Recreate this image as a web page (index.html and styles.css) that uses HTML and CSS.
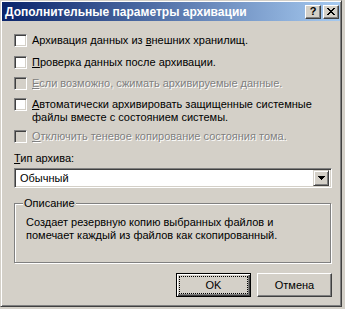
FILE: index.html
```html
<!DOCTYPE html>
<html lang="ru">
<head>
  <meta charset="UTF-8" />
  <title>Дополнительные параметры архивации</title>
  <link rel="stylesheet" href="styles.css">
</head>
<body>

  <div class="window">
    <div class="titlebar">
      <span class="title">Дополнительные параметры архивации</span>
      <div class="caption-buttons">
        <span class="cap-btn">?</span>
        <span class="cap-btn">
          <svg width="8" height="7" viewBox="0 0 8 7" shape-rendering="crispEdges">
            <path d="M0 0h2v1h-2zM6 0h2v1h-2zM1 1h2v1h-2zM5 1h2v1h-2zM2 2h4v1h-4zM3 3h2v1h-2zM2 4h4v1h-4zM1 5h2v1h-2zM5 5h2v1h-2zM0 6h2v1h-2zM6 6h2v1h-2z" fill="#000"/>
          </svg>
        </span>
      </div>
    </div>

    <div class="content">
      <div class="check row1">
        <span class="box"></span>
        <span class="text">Архивация данных из <u>в</u>нешних хранилищ.</span>
      </div>
      <div class="check row2">
        <span class="box"></span>
        <span class="text"><u>П</u>роверка данных после архивации.</span>
      </div>
      <div class="check row3 disabled">
        <span class="box"></span>
        <span class="text"><u>Е</u>сли возможно, сжимать архивируемые данные.</span>
      </div>
      <div class="check row4">
        <span class="box"></span>
        <span class="text"><u>А</u>втоматически архивировать защищенные системные<br>файлы вместе с состоянием системы.</span>
      </div>
      <div class="check row5 disabled">
        <span class="box"></span>
        <span class="text"><u>О</u>тключить теневое копирование состояния тома.</span>
      </div>

      <div class="field-label"><u>Т</u>ип архива:</div>
      <div class="combo">
        <span class="combo-value">Обычный</span>
        <span class="drop-btn">
          <svg width="7" height="4" viewBox="0 0 7 4" shape-rendering="crispEdges">
            <path d="M0 0h7v1h-7zM1 1h5v1h-5zM2 2h3v1h-3zM3 3h1v1h-1z" fill="#000"/>
          </svg>
        </span>
      </div>

      <div class="group">
        <span class="group-label">Описание</span>
        <p class="group-text">Создает резервную копию выбранных файлов и<br>помечает каждый из файлов как скопированный.</p>
      </div>

      <div class="buttons">
        <button class="btn default"><span class="focus">OK</span></button>
        <button class="btn">Отмена</button>
      </div>
    </div>
  </div>

</body>
</html>
```

FILE: styles.css
```css
body {
  margin: 0;
  background: #d4d0c8;
  font-family: "Liberation Sans", Arial, sans-serif;
  font-size: 11px;
  color: #000;
}
.window {
  width: 342px;
  height: 307px;
  box-sizing: border-box;
  padding: 1px;
  border: 1px solid;
  border-color: #d4d0c8 #404040 #404040 #d4d0c8;
  box-shadow: inset 1px 1px #fff, inset -1px -1px #808080;
  background: #d4d0c8;
}
.titlebar {
  height: 19px;
  display: flex;
  align-items: center;
  justify-content: space-between;
  padding-left: 3px;
  background: linear-gradient(to right, #0a246a, #a6caf0);
}
.title {
  color: #fff;
  font-weight: bold;
  font-size: 12px;
}
.caption-buttons {
  display: flex;
  gap: 2px;
  margin-right: 1px;
}
.cap-btn {
  width: 16px;
  height: 14px;
  box-sizing: border-box;
  display: flex;
  align-items: center;
  justify-content: center;
  background: #d4d0c8;
  border: 1px solid;
  border-color: #fff #404040 #404040 #fff;
  box-shadow: inset -1px -1px #808080;
  font-weight: bold;
  font-size: 11px;
  line-height: 1;
}
.content {
  padding: 13px 8px 0 12px;
}
.check {
  display: flex;
  align-items: flex-start;
  line-height: 13px;
}
.row2 { margin-top: 9px; }
.row3 { margin-top: 8px; }
.row4 { margin-top: 8px; }
.row5 { margin-top: 6px; }
.box {
  width: 13px;
  height: 13px;
  flex: none;
  box-sizing: border-box;
  border: 1px solid;
  border-color: #808080 #fff #fff #808080;
  box-shadow: inset 1px 1px #404040, inset -1px -1px #d4d0c8;
  background: #fff;
}
.text {
  margin-left: 5px;
}
.disabled .box {
  background: #d4d0c8;
}
.disabled .text {
  color: #808080;
  text-shadow: 1px 1px 0 #fff;
}
.field-label {
  margin-top: 9px;
  line-height: 13px;
}
.combo {
  margin-top: 3px;
  width: 318px;
  height: 20px;
  box-sizing: border-box;
  display: flex;
  align-items: center;
  justify-content: space-between;
  border: 1px solid;
  border-color: #808080 #fff #fff #808080;
  box-shadow: inset 1px 1px #404040, inset -1px -1px #d4d0c8;
  background: #fff;
  padding: 2px;
}
.combo-value {
  padding-left: 3px;
}
.drop-btn {
  width: 16px;
  height: 16px;
  box-sizing: border-box;
  display: flex;
  align-items: center;
  justify-content: center;
  background: #d4d0c8;
  border: 1px solid;
  border-color: #d4d0c8 #404040 #404040 #d4d0c8;
  box-shadow: inset 1px 1px #fff, inset -1px -1px #808080;
}
.group {
  position: relative;
  margin-top: 15px;
  width: 317px;
  height: 60px;
  box-sizing: border-box;
  border: 1px solid #808080;
  box-shadow: inset 1px 1px #fff, 1px 1px #fff;
}
.group-label {
  position: absolute;
  top: -7px;
  left: 8px;
  padding: 0 1px;
  background: #d4d0c8;
  line-height: 13px;
}
.group-text {
  margin: 12px 0 0 11px;
  line-height: 13px;
}
.buttons {
  display: flex;
  justify-content: flex-end;
  gap: 6px;
  margin-top: 10px;
  width: 318px;
}
.btn {
  width: 75px;
  height: 24px;
  box-sizing: border-box;
  margin: 0;
  padding: 0;
  font-family: inherit;
  font-size: 11px;
  color: #000;
  background: #d4d0c8;
  border: 1px solid;
  border-color: #fff #404040 #404040 #fff;
  box-shadow: inset -1px -1px #808080, inset 1px 1px #d4d0c8;
}
.btn.default {
  border: 1px solid #000;
  box-shadow: inset 1px 1px #fff, inset -1px -1px #404040, inset -2px -2px #808080;
  padding: 2px;
}
.focus {
  display: flex;
  align-items: center;
  justify-content: center;
  height: 100%;
  box-sizing: border-box;
  border: 1px dotted #000;
}
```
